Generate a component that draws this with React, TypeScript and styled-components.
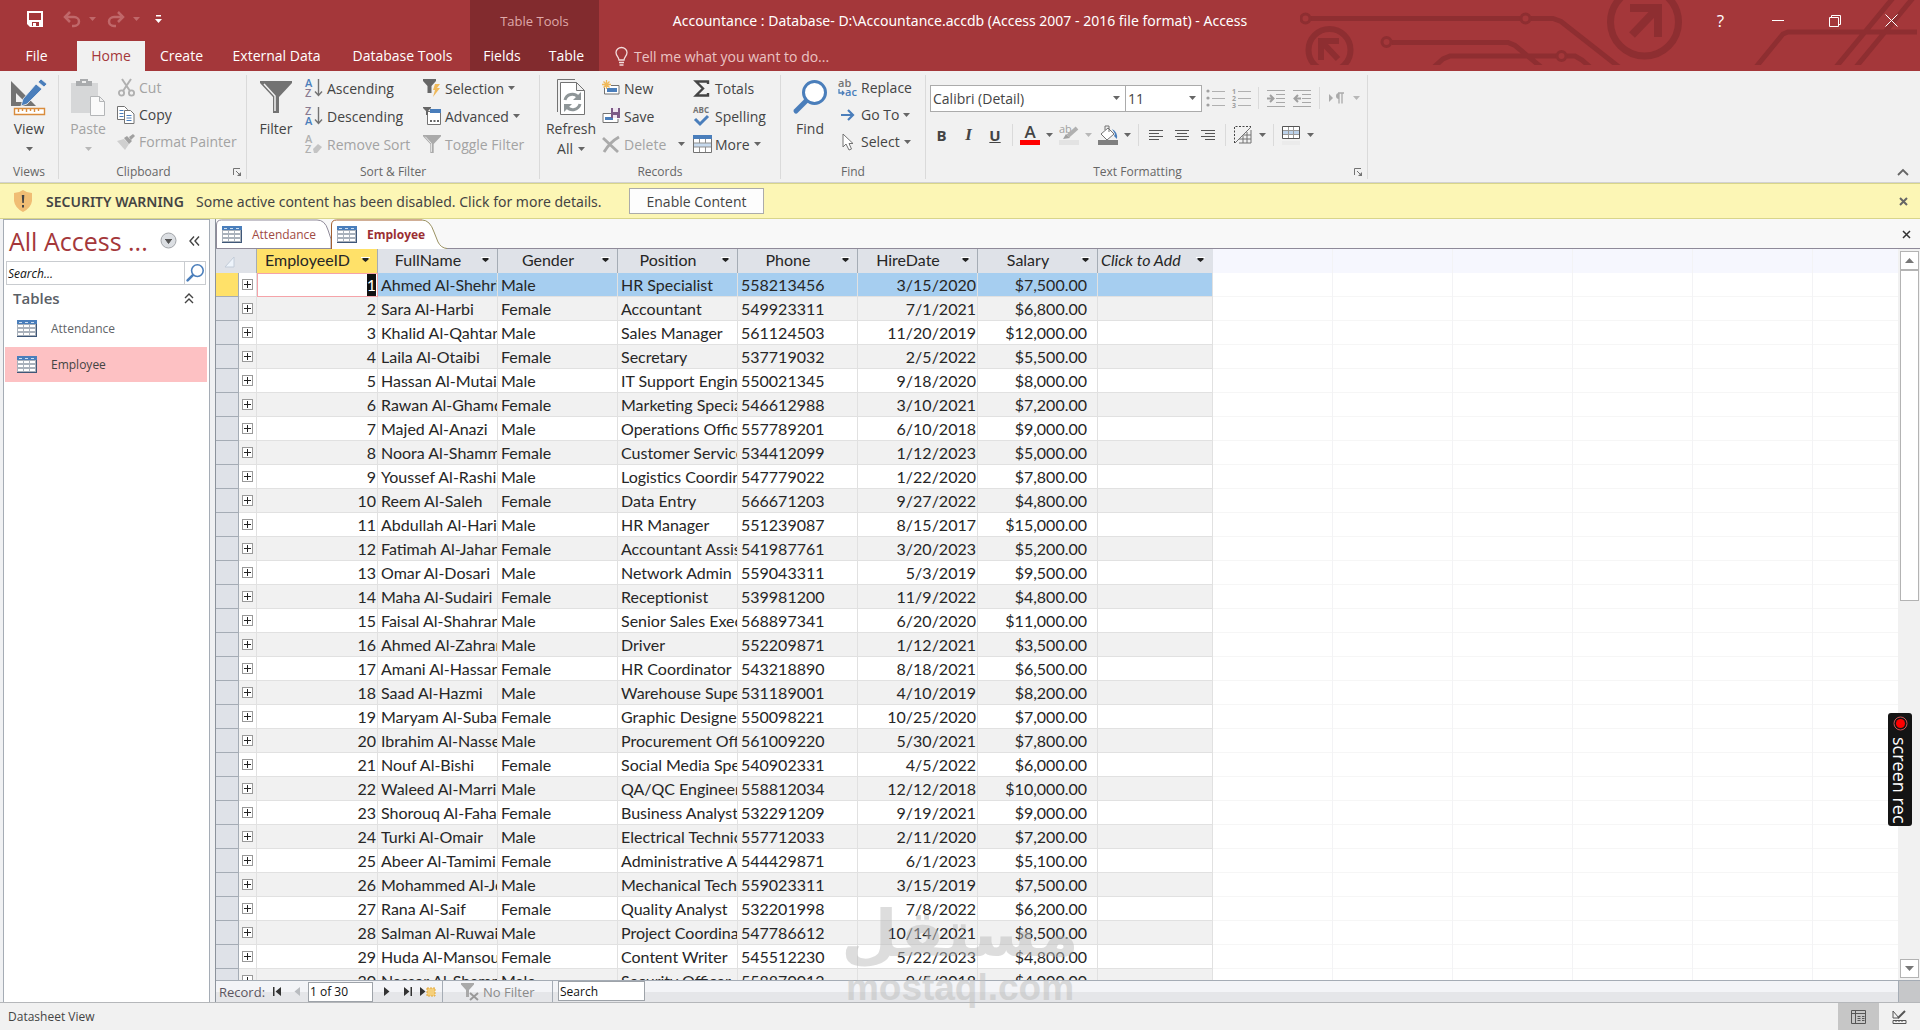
import React from 'react';
import styled, { createGlobalStyle, css } from 'styled-components';

const ui = `"Open Sans", "Noto Sans", sans-serif`;
const wideUi = `"Noto Sans", "Open Sans", sans-serif`;
const red = '#a4373a';
const darkRed = '#822b2e';
const line = '#a5acb5';

const Global = createGlobalStyle`
  * { box-sizing: border-box; }
  body { margin: 0; background: #f1f1f1; font-family: ${ui}; font-size: 14px; color: #444; overflow: hidden; }
  button, input, select { font: inherit; color: inherit; margin: 0; }
  button { padding: 0; border: 0; background: none; cursor: default; white-space: nowrap; }
  svg { display: block; flex: none; overflow: visible; }
`;

/* ---------- Frame ---------- */

const Window = styled.div`
  height: 100vh;
  display: flex;
  flex-direction: column;
  position: relative;
`;

const TopBand = styled.header`
  background: ${red};
  position: relative;
  color: #fff;
`;

const Circuit = styled.svg`
  position: absolute;
  top: 0;
  right: 0;
  overflow: hidden;
`;

const TitleRow = styled.div`
  display: grid;
  grid-template-columns: 1fr auto 1fr;
  height: 41px;
  align-items: center;
  position: relative;
`;

const TitleLeft = styled.div`
  display: flex;
  align-items: center;
  height: 41px;
`;

const QuickAccess = styled.div`
  display: flex;
  align-items: center;
  width: 470px;
  padding-left: 26px;
  padding-bottom: 3px;
`;

const QuickButton = styled.button<{ $w: number }>`
  width: ${(p) => p.$w}px;
  height: 24px;
  display: flex;
  align-items: center;
`;

const ContextTitle = styled.div`
  width: 129px;
  height: 41px;
  line-height: 43px;
  text-align: center;
  background: ${darkRed};
  color: #dfa9a9;
  font-size: 13px;
`;

const Title = styled.h1`
  margin: 0;
  font-family: ${wideUi};
  font-size: 14px;
  font-weight: 400;
  line-height: 20px;
`;

const WindowButtons = styled.div`
  display: flex;
  justify-content: flex-end;
`;

const WindowButton = styled.button`
  width: 57px;
  height: 38px;
  display: flex;
  align-items: center;
  justify-content: center;
  font-size: 17px;
`;

const Tabs = styled.nav`
  display: flex;
  height: 30px;
  position: relative;
`;

const Tab = styled.button<{ $w: number; $active?: boolean; $dark?: boolean; $file?: boolean }>`
  width: ${(p) => p.$w}px;
  height: 30px;
  line-height: 30px;
  padding-right: ${(p) => (p.$file ? 4 : 0)}px;
  text-align: center;
  background: ${(p) => (p.$active ? '#f1f1f1' : p.$dark ? darkRed : 'transparent')};
  color: ${(p) => (p.$active ? red : '#fff')};
`;

const TellMe = styled.button`
  display: flex;
  align-items: center;
  gap: 6px;
  padding-left: 16px;
  color: #eac4c4;
`;

/* ---------- Ribbon ---------- */

const Ribbon = styled.section`
  display: flex;
  height: 112px;
  padding: 4px 0 3px;
  background: #f1f1f1;
  border-bottom: 1px solid #d2d2d2;
`;

const Group = styled.div<{ $w: number }>`
  width: ${(p) => p.$w}px;
  display: flex;
  flex-direction: column;
  border-right: 1px solid #dadada;
`;

const GroupBody = styled.div<{ $column?: boolean }>`
  flex: 1;
  display: flex;
  flex-direction: ${(p) => (p.$column ? 'column' : 'row')};
  padding-left: 4px;
`;

const GroupFooter = styled.div`
  display: flex;
  align-items: center;
  height: 14px;
  line-height: 14px;
  font-size: 12px;
  color: #666;
`;

const GroupName = styled.span`
  flex: 1;
  text-align: center;
`;

const Launcher = styled.button`
  width: 18px;
  height: 12px;
  display: flex;
  justify-content: center;
  align-items: center;
`;

const BigButton = styled.button<{ $w?: number }>`
  width: ${(p) => p.$w || 50}px;
  height: 88px;
  display: flex;
  flex-direction: column;
  align-items: center;
  line-height: 18px;
  &:disabled { color: #a3a3a3; }
`;

const BigIcon = styled.span`
  height: 44px;
  display: flex;
  align-items: center;
`;

const BigLine = styled.span`
  height: 20px;
  display: flex;
  align-items: center;
  gap: 5px;
`;

const Stack = styled.div<{ $w?: number; $row: number }>`
  ${(p) => p.$w && css`width: ${p.$w}px;`}
  display: grid;
  grid-auto-rows: ${(p) => p.$row}px;
  align-content: start;
`;

const SmallButton = styled.button`
  display: flex;
  align-items: center;
  gap: 4px;
  padding: 0 4px 2px;
  text-align: left;
  &:disabled { color: #a3a3a3; }
`;

const SmallIcon = styled.span`
  width: 18px;
  display: flex;
  justify-content: center;
`;

const SplitGap = styled.span`
  width: 4px;
`;

const ToolRow = styled.div<{ $second?: boolean }>`
  display: flex;
  align-items: center;
  height: 26px;
  margin-top: ${(p) => (p.$second ? 11 : 10)}px;
  ${(p) => p.$second && css`margin-left: -2px;`}
`;

const Combo = styled.label<{ $w: number }>`
  display: grid;
  grid-template-columns: 1fr 12px;
  align-items: center;
  width: ${(p) => p.$w}px;
  height: 27px;
  background: #fff;
  border: 1px solid #ababab;
  & + & { margin-left: -1px; }
`;

const ComboSelect = styled.select`
  appearance: none;
  border: 0;
  background: none;
  height: 24px;
  padding: 0 0 0 2px;
  outline: none;
`;

const ToolButton = styled.button<{ $w?: number }>`
  width: ${(p) => p.$w || 26}px;
  height: 26px;
  display: flex;
  align-items: center;
  justify-content: center;
`;

const Letter = styled.span<{ $kind: 'b' | 'i' | 'u' }>`
  font-size: 15px;
  line-height: 18px;
  font-weight: 700;
  ${(p) => p.$kind === 'i' && css`font-family: "Liberation Serif", serif; font-style: italic; font-size: 17px;`}
  ${(p) => p.$kind === 'u' && css`text-decoration: underline;`}
`;

const Divider = styled.span`
  width: 1px;
  height: 22px;
  margin: 0 4px;
  background: #dadada;
`;

const RibbonEnd = styled.div`
  flex: 1;
  display: flex;
  align-items: flex-end;
  justify-content: flex-end;
  padding: 0 11px 3px;
`;

/* ---------- Message bar ---------- */

const MessageBar = styled.section`
  display: flex;
  align-items: center;
  height: 36px;
  padding: 0 12px 0 13px;
  background: #fcf6b5;
  border-top: 1px solid #d8d58b;
  border-bottom: 1px solid #d8d58b;
`;

const WarningTitle = styled.strong`
  margin-left: 13px;
  font-family: ${wideUi};
  font-weight: 600;
  width: 150px;
  white-space: nowrap;
`;

const WarningText = styled.span`
  width: 433px;
  font-family: ${wideUi};
  white-space: nowrap;
`;

const EnableButton = styled.button`
  width: 135px;
  height: 26px;
  background: #fdfdfd;
  border: 1px solid #ababab;
`;

const Spacer = styled.span`
  flex: 1;
`;

/* ---------- Navigation pane ---------- */

const Workspace = styled.div`
  flex: 1;
  min-height: 0;
  display: flex;
  background: #f0f1f3;
  border-bottom: 1px solid #b5b7ba;
`;

const Pane = styled.aside`
  width: 207px;
  margin: 0 5px 0 3px;
  background: #fff;
  border: 1px solid ${line};
  border-bottom: 0;
  padding-left: 1px;
`;

const PaneHead = styled.div`
  display: flex;
  align-items: center;
  height: 41px;
  padding: 0 10px 0 4px;
`;

const PaneTitle = styled.h2`
  margin: 0;
  flex: 1;
  font-size: 25px;
  line-height: 34px;
  font-weight: 400;
  color: ${red};
  white-space: nowrap;
`;

const PaneButton = styled.button`
  margin-left: 12px;
`;

const SearchBox = styled.div`
  display: flex;
  height: 24px;
  margin: 0 3px 0 1px;
  border: 1px solid #c9ccd0;
`;

const PaneSearch = styled.input`
  flex: 1;
  min-width: 0;
  border: 0;
  padding: 0 1px;
  font-size: 12px;
  font-style: italic;
  outline: none;
  &::placeholder { color: #111; opacity: 1; }
`;

const PaneSearchButton = styled.button`
  width: 21px;
  border-left: 1px solid #c9ccd0;
  display: flex;
  align-items: center;
  justify-content: center;
`;

const PaneGroup = styled.button`
  display: flex;
  align-items: center;
  justify-content: space-between;
  width: 100%;
  height: 26px;
  padding: 0 15px 0 8px;
  font-size: 15px;
  font-weight: 600;
  color: #5a6066;
`;

const PaneItem = styled.button<{ $active?: boolean }>`
  display: flex;
  align-items: center;
  gap: 14px;
  width: 202px;
  height: 35px;
  margin-bottom: 1px;
  padding-left: 12px;
  font-size: 12px;
  color: ${(p) => (p.$active ? '#444' : '#5f6469')};
  background: ${(p) => (p.$active ? '#fdc1c3' : 'transparent')};
`;

/* ---------- Document area ---------- */

const Doc = styled.main`
  flex: 1;
  min-width: 0;
  display: flex;
  flex-direction: column;
  border-left: 1px solid #8c939c;
  background: #f8f8f8;
`;

const DocTabs = styled.div`
  display: flex;
  height: 30px;
  padding-right: 9px;
  background: #f8f8f8;
  box-shadow: inset 0 -1px 0 #8f8a99;
`;

const DocTab = styled.button<{ $active?: boolean }>`
  position: relative;
  width: 115px;
  height: 30px;
  display: flex;
  align-items: center;
  gap: 10px;
  padding-left: 6px;
  font-size: 12px;
  font-weight: ${(p) => (p.$active ? 700 : 400)};
  color: ${(p) => (p.$active ? '#9b2f33' : '#a04a44')};
  & > * { position: relative; }
`;

const DocTabShape = styled.svg`
  && { position: absolute; left: 0; top: 0; }
`;

const Sheet = styled.div`
  flex: 1;
  min-height: 0;
  display: flex;
  overflow: hidden;
  background: #fff;
`;

const Table = styled.table`
  width: 997px;
  flex: none;
  align-self: flex-start;
  table-layout: fixed;
  border-collapse: separate;
  border-spacing: 0;
  font-family: Lato, "Open Sans", sans-serif;
  font-size: 16px;
  line-height: 22px;
  color: #262626;
`;

const Col = styled.col<{ $w: number }>`
  width: ${(p) => p.$w}px;
`;

const HeadCell = styled.th<{ $active?: boolean; $plain?: boolean; $add?: boolean }>`
  height: 24px;
  padding: 0 0 2px;
  font-weight: 400;
  font-style: ${(p) => (p.$add ? 'italic' : 'normal')};
  background: ${(p) => (p.$active ? '#ffe169' : '#dfe2e8')};
  border-right: 1px solid ${(p) => (p.$plain ? '#dfe2e8' : line)};
`;

const HeadInner = styled.span`
  display: flex;
  align-items: center;
  justify-content: space-between;
  padding: 0 7px 0 3px;
`;

const HeadLabel = styled.span`
  flex: 1;
  padding-right: 6px;
  text-align: center;
`;

const BodyRow = styled.tr<{ $current?: boolean }>`
  background: ${(p) => (p.$current ? '#a6cef0' : '#fff')};
  &:nth-child(even) { background: #f1f1f1; }
`;

const Cell = styled.td<{ $align?: 'right'; $padRight?: number }>`
  height: 24px;
  padding: 0 ${(p) => p.$padRight ?? 1}px 0 3px;
  border-right: 1px solid #e1e1e1;
  border-bottom: 1px solid #e1e1e1;
  text-align: ${(p) => p.$align || 'left'};
  white-space: nowrap;
  overflow: hidden;
`;

const RowSelector = styled.td<{ $current?: boolean }>`
  padding: 0;
  background: ${(p) => (p.$current ? '#ffe169' : '#dfe2e8')};
  border-right: 1px solid ${line};
  border-bottom: 1px solid ${line};
`;

const ExpandCell = styled.td<{ $current?: boolean }>`
  padding: 0 0 0 3px;
  border-right: 1px solid #e1e1e1;
  border-bottom: 1px solid #e1e1e1;
  ${(p) => p.$current && css`background: #fff;`}
`;

const ExpandButton = styled.button`
  display: block;
  width: 11px;
  height: 11px;
  border: 1px solid #9a9a9a;
  background: #fff;
`;

const ActiveCell = styled.td`
  height: 24px;
  padding: 0;
  background: #fff;
  outline: 1px solid #f5a3a9;
  outline-offset: -1px;
  text-align: right;
`;

const Selected = styled.span`
  display: inline-block;
  margin-right: 2px;
  background: #111;
  color: #fff;
`;

const Blank = styled.div`
  flex: 1;
  background:
    repeating-linear-gradient(to right, transparent 0 119px, #f3f3f5 119px 120px),
    linear-gradient(#f6f7fe 0 24px, transparent 24px),
    repeating-linear-gradient(to bottom, transparent 0 23px, #f6f6f6 23px 24px);
`;

const Scroll = styled.div`
  width: 22px;
  padding: 2px 1px 2px 2px;
  background: #f1f1f1;
  display: flex;
  flex-direction: column;
`;

const ScrollButton = styled.button`
  height: 19px;
  background: #fff;
  border: 1px solid #b3b3b3;
  display: flex;
  align-items: center;
  justify-content: center;
`;

const Track = styled.div`
  flex: 1;
`;

const Thumb = styled.div`
  height: 48%;
  background: #fff;
  border: 1px solid #b3b3b3;
`;

const RecordBar = styled.div`
  display: flex;
  height: 22px;
  border-top: 1px solid ${line};
  background: linear-gradient(#f3f4f7 0 11px, #e5e6e9 11px);
  font-size: 13px;
  color: #5c5560;
`;

const RecordNav = styled.div`
  display: flex;
  align-items: center;
  width: 227px;
  padding-left: 3px;
  border-right: 1px solid ${line};
`;

const RecordLabel = styled.label`
  width: 49px;
`;

const NavButton = styled.button<{ $w?: number }>`
  width: ${(p) => p.$w || 22}px;
  height: 20px;
  display: flex;
  align-items: center;
  justify-content: center;
`;

const RecordInput = styled.input<{ $w: number }>`
  width: ${(p) => p.$w}px;
  height: 20px;
  padding: 0 1px;
  border: 1px solid #9ea3a9;
  background: #fff;
  color: #111;
  font-size: 12px;
  &::placeholder { color: #111; opacity: 1; }
`;

const NoFilter = styled.button`
  display: flex;
  align-items: center;
  gap: 3px;
  width: 110px;
  padding-left: 18px;
  margin-right: 5px;
  border-right: 1px solid ${line};
  color: #8a8a8a;
`;

const Corner = styled.span`
  width: 22px;
  background: #c6c7c9;
  border-left: 1px solid ${line};
`;

/* ---------- Status bar ---------- */

const StatusBar = styled.footer`
  display: flex;
  align-items: center;
  height: 27px;
  padding-left: 8px;
  background: #f1f1f1;
  font-size: 12px;
`;

const ViewButton = styled.button<{ $active?: boolean }>`
  width: 41px;
  height: 27px;
  display: flex;
  align-items: center;
  justify-content: center;
  background: ${(p) => (p.$active ? '#c6c6c6' : 'transparent')};
`;

/* ---------- Overlays ---------- */

const Watermark = styled.div`
  position: absolute;
  left: 0;
  right: 0;
  bottom: 20px;
  display: flex;
  flex-direction: column;
  align-items: center;
  color: #bdbdbd;
  opacity: 0.5;
  font-weight: 700;
  pointer-events: none;
`;

const WatermarkArabic = styled.span`
  font-family: "DejaVu Sans", sans-serif;
  font-size: 65px;
  line-height: 64px;
`;

const WatermarkLatin = styled.span`
  font-family: "Liberation Sans", Arial, sans-serif;
  font-size: 37px;
  line-height: 44px;
`;

const Recorder = styled.button`
  position: absolute;
  right: 8px;
  bottom: 204px;
  width: 24px;
  height: 113px;
  padding-top: 3px;
  border-radius: 3px;
  background: #141414;
  color: #fff;
  display: flex;
  flex-direction: column;
  align-items: center;
  gap: 6px;
`;

const RecorderText = styled.span`
  writing-mode: vertical-rl;
  font-size: 18px;
  line-height: 20px;
`;

/* ---------- Icons ---------- */

const gray = '#737373';
const blue = '#4a7ebb';
const pale = '#b0b0b0';

const Caret = ({ c = '#666' }: { c?: string }) => (
  <svg width="7" height="4" viewBox="0 0 7 4"><path d="M0 0h7L3.500 4z" fill={c} /></svg>
);

const SaveIcon = () => (
  <svg width="18" height="18" viewBox="0 0 18 18">
    <path d="M1 1h16v16H4l-3-3z" fill="#fff" />
    <path d="M3 3h12v7H3zM6 12h7v4H6z" fill={red} />
    <path d="M7 13h3v4H7z" fill="#fff" />
  </svg>
);

const UndoIcon = ({ flip }: { flip?: boolean }) => (
  <svg width="19" height="18" viewBox="0 0 19 18">
    <g transform={flip ? 'translate(19 0) scale(-1 1)' : undefined} fill="none" stroke="#c0686a" strokeWidth="2.500">
      <path d="M2 7h9a5 4.500 0 0 1 0 9H9" />
      <path d="M7 2L2 7l5 5" />
    </g>
  </svg>
);

const CustomizeIcon = () => (
  <svg width="7" height="8" viewBox="0 0 7 8"><path d="M1 0h5v1.500H1zM0 4h7L3.500 8z" fill="#fff" /></svg>
);

const BulbIcon = () => (
  <svg width="13" height="19" viewBox="0 0 13 19" fill="none" stroke="#f3dcdc" strokeWidth="1.300">
    <path d="M4 13c0-3-3-4-3-7.500a5.500 5 0 0 1 11 0C12 9 9 10 9 13zM4 15.500h5M4.500 18h4" />
  </svg>
);

const CircuitArt = () => (
  <Circuit width="620" height="65" viewBox="1300 0 620 65" fill="none" stroke="#8e2e31" strokeWidth="5" aria-hidden="true">
    <path d="M1310 18.500H1520M1531 18.500h22l8 3L1619 67M1392 42.500h116l7 3L1541 67M1434 67l9-8 7-3H1556M1567 56h8l7 4 8 7" />
    <path d="M1756 67l27-33 5-2H1917M1836 67L1893-2M1856 67L1913-2" />
    <g strokeWidth="3">
      <circle cx="1305.500" cy="18.500" r="4.500" /><circle cx="1525.500" cy="18.500" r="4.500" />
      <circle cx="1386.500" cy="42" r="4.500" /><circle cx="1561.500" cy="56" r="4.500" />
    </g>
    <circle cx="1329.500" cy="50" r="21" strokeWidth="6" />
    <circle cx="1644.500" cy="22" r="34" strokeWidth="7" />
    <path d="M1321 60V41h18M1322 42l16 17" strokeWidth="6" />
    <path d="M1630 8h28v29M1656 10L1632 35" strokeWidth="8" />
  </Circuit>
);

const ViewIcon = () => (
  <svg width="38" height="38" viewBox="0 0 38 38">
    <path d="M1 3v25h25zM6 15l9 9H6z" fill={gray} fillRule="evenodd" />
    <path d="M31 1l6 5-3 3-6-5zM26 6l6 5-15 15-6 2 2-7z" fill={blue} stroke="#f1f1f1" strokeWidth="0.800" />
    <path d="M4.500 30.500h30v6h-30zM8.500 31v3M12.500 31v2M16.500 31v3M20.500 31v2M24.500 31v3M28.500 31v2" fill="#fff" stroke="#d98c3c" strokeWidth="1.400" />
  </svg>
);

const PasteIcon = () => (
  <svg width="36" height="38" viewBox="0 0 36 38">
    <path d="M1 5h27v30H1z" fill="#d6d7d8" />
    <path d="M6 3h4V1h8v2h4v5H6z" fill="#a9abad" /><path d="M12 3h4v2h-4z" fill="#eee" />
    <path d="M20.500 18.500h9l5 5v14h-14zM29.500 18.500v5h5" fill="#fafafa" stroke="#b4b6b8" />
  </svg>
);

const CutIcon = () => (
  <svg width="17" height="18" viewBox="0 0 17 18" fill="none" stroke={pale} strokeWidth="1.800">
    <path d="M4 0l8 12M13 0L5 12" strokeWidth="2" />
    <circle cx="3.500" cy="14" r="2.600" /><circle cx="13.500" cy="14" r="2.600" />
  </svg>
);

const CopyIcon = () => (
  <svg width="18" height="18" viewBox="0 0 18 18" fill="#fff" stroke={gray}>
    <path d="M.5.500h7l3 3v10H.5z" /><path d="M2.500 4.500h4M2.500 7.500h4M2.500 10.500h4" stroke={blue} />
    <path d="M7.500 4.500h6l3.500 3.500v9.500h-9.500z" /><path d="M9.500 9.500h5M9.500 12h5M9.500 14.500h5" stroke={blue} />
  </svg>
);

const BrushIcon = () => (
  <svg width="18" height="16" viewBox="0 0 18 16">
    <path d="M0 7l7-2 5 5-4 6z" fill="#cfcfcf" /><path d="M7 4l3-2 5 5-3 3zM12 3l4-3 2 2-4 4z" fill="#a0a0a0" />
  </svg>
);

const FunnelIcon = ({ w = 32, c = gray }: { w?: number; c?: string }) => (
  <svg width={w} height={w} viewBox="0 0 32 32">
    <path d="M0 0h32v2L19 16v16h-6V16L0 2z" fill={c} />
    <path d="M4 3l11 12v15" fill="none" stroke="#f3f3f3" strokeWidth="1.500" />
  </svg>
);

const SortText = styled.text`
  font-family: ${ui};
  font-size: 11px;
  font-weight: 600;
`;

const SortIcon = ({ a, b, ca, cb, off }: { a: string; b: string; ca: string; cb: string; off?: boolean }) => (
  <svg width="18" height="20" viewBox="0 0 18 20">
    <SortText x="0" y="9" fill={ca}>{a}</SortText>
    <SortText x="0" y="19" fill={cb}>{b}</SortText>
    {off
      ? <path d="M8 15l5-5 4 3-5 6H9z" fill="#c4c4c4" />
      : <path d="M13.500 1v16M10 13.500l3.500 4 3.500-4" fill="none" stroke={gray} strokeWidth="1.400" />}
  </svg>
);

const SelectionIcon = () => (
  <svg width="18" height="18" viewBox="0 0 18 18">
    <path d="M0 0h13v2L8.500 7v7h-4V7L0 2z" fill="#666" /><path d="M12 5h5l-3 4h3l-7 9 2-7h-2z" fill="#f0b95a" />
  </svg>
);

const AdvancedIcon = () => (
  <svg width="18" height="18" viewBox="0 0 18 18">
    <path d="M4.500 4.500h13v13h-13z" fill="#fff" stroke={gray} /><path d="M7 2h11v4H7z" fill={blue} />
    <path d="M0 0h8v1L5 4v4H3V4L0 1z" fill="#666" /><path d="M7 13h2v2H7zM10.500 13h2v2h-2zM14 13h2v2h-2z" fill="#666" />
  </svg>
);

const RefreshIcon = () => (
  <svg width="30" height="38" viewBox="0 0 30 38" fill="none">
    <path d="M1.500 34V1.500H19" stroke={gray} /><path d="M4.500 4.500h16l8 8v24h-24zM20.500 4.500v8h8" fill="#fff" stroke={gray} />
    <path d="M9 22a7.500 7.500 0 0 1 13-3M24 26a7.500 7.500 0 0 1-13 3" stroke="#8f9698" strokeWidth="3" />
    <path d="M25 14v8h-8zM8 34v-8h8z" fill="#8f9698" />
  </svg>
);

const NewIcon = () => (
  <svg width="18" height="16" viewBox="0 0 18 16">
    <path d="M2.500 7.500V14h14.500V5.500H9" fill="#fff" stroke={gray} /><path d="M5 8h10v4H5z" fill={blue} />
    <path d="M4.500 0v9M0 4.500h9M1.500 1.500l6 6M7.500 1.500l-6 6" stroke="#f0b95a" strokeWidth="1.300" />
  </svg>
);

const SaveRecordIcon = () => (
  <svg width="18" height="16" viewBox="0 0 18 16">
    <path d="M9 5.500H1v9h15V11" fill="#fff" stroke={gray} /><path d="M3 9h8v3H3z" fill={blue} />
    <path d="M9 0h9v10H9z" fill="#7c5a86" /><path d="M11 0h5v4h-5zM11 7h4v3h-4z" fill="#efe6f0" />
  </svg>
);

const DeleteIcon = () => (
  <svg width="18" height="17" viewBox="0 0 18 17"><path d="M1 2l15 14M17 1Q8 6 2 16" fill="none" stroke="#aaa" strokeWidth="2.800" /></svg>
);

const SigmaIcon = () => (
  <svg width="16" height="17" viewBox="0 0 16 17"><path d="M14 4V1.500H2L9 8.500 2 15.500h12V13" fill="none" stroke="#444" strokeWidth="2.400" /></svg>
);

const SpellIcon = () => (
  <svg width="18" height="20" viewBox="0 0 18 20">
    <text x="0" y="7" fontSize="8" fontWeight="700" fontFamily="Open Sans" fill={gray}>ABC</text>
    <path d="M2 13l5 5 8-8" fill="none" stroke={blue} strokeWidth="3" />
  </svg>
);

const MoreIcon = () => (
  <svg width="19" height="18" viewBox="0 0 19 18">
    <path d="M.5.500h18v17H.5z" fill="#fff" stroke={gray} /><path d="M0 0h19v4H0z" fill={blue} />
    <path d="M1 8h17v4H1z" fill="#c7daee" /><path d="M6.500 4v4M12.500 4v4M6.500 12v5M12.500 12v5M1 8h17M1 12h17" stroke="#8f8f8f" />
  </svg>
);

const MagnifierIcon = ({ size = 34, stroke = 3 }: { size?: number; stroke?: number }) => (
  <svg width={size} height={size} viewBox="0 0 34 34">
    <path d="M13 21L3 31" stroke={blue} strokeWidth={stroke + 2} strokeLinecap="round" />
    <circle cx="21.500" cy="12.500" r="11" fill="#fff" stroke={blue} strokeWidth={stroke} />
  </svg>
);

const ReplaceIcon = () => (
  <svg width="20" height="20" viewBox="0 0 20 20" fontFamily="Open Sans" fontSize="11" fontWeight="600">
    <text x="0" y="9" fill={gray}>ab</text><text x="7" y="18" fill={blue}>ac</text>
    <path d="M1 11v4h5M4 13l2 2-2 2" fill="none" stroke={blue} strokeWidth="1.300" />
  </svg>
);

const GoToIcon = () => (
  <svg width="14" height="12" viewBox="0 0 14 12"><path d="M0 6h12M7 1l5 5-5 5" fill="none" stroke={blue} strokeWidth="2.200" /></svg>
);

const PointerIcon = () => (
  <svg width="12" height="18" viewBox="0 0 12 18"><path d="M1 1v13l3-3 3 6 2.500-1L7 10.500h4z" fill="#fff" stroke={gray} /></svg>
);

const LauncherIcon = () => (
  <svg width="8" height="8" viewBox="0 0 8 8"><path d="M.5 7V.500H7M3 3l3 3" fill="none" stroke={gray} /><path d="M8 4v4H4z" fill={gray} /></svg>
);

const ListIcon = ({ numbered }: { numbered?: boolean }) => (
  <svg width="19" height="19" viewBox="0 0 19 19">
    {[2, 9, 16].map((y, i) => (
      <g key={y}>
        {numbered
          ? <text x="0" y={y + 3} fontSize="7" fontWeight="700" fontFamily="Open Sans" fill="#a0a0a0">{i + 1}</text>
          : <circle cx="2" cy={y} r="1.600" fill="#a0a0a0" />}
        <path d={`M6 ${y + 0.5}h13`} stroke="#b0b0b0" />
      </g>
    ))}
  </svg>
);

const IndentIcon = ({ out }: { out?: boolean }) => (
  <svg width="18" height="17" viewBox="0 0 18 17">
    <path d="M0 .500h18M9 4.500h9M9 8.500h9M9 12.500h9M0 16.500h18" stroke="#a8a8a8" />
    <path d={out ? 'M8 8.500H2M5 5L1.500 8.500 5 12' : 'M0 8.500h6M3 5l3.500 3.500L3 12'} fill="none" stroke="#a0a0a0" strokeWidth="2" />
  </svg>
);

const DirectionIcon = () => (
  <svg width="16" height="12" viewBox="0 0 16 12"><path d="M0 2l4 4-4 4z" fill="#aaa" /><path d="M10 1.500v10M13 1.500v10M15 1H9" stroke="#aaa" strokeWidth="1.300" /><path d="M10 1a3 3 0 0 0 0 6z" fill="#aaa" /></svg>
);

const FontColorIcon = () => (
  <svg width="20" height="20" viewBox="0 0 20 20">
    <text x="10" y="13" textAnchor="middle" fontSize="17" fontWeight="600" fontFamily="Open Sans" fill="#444">A</text>
    <path d="M0 15h20v5H0z" fill="#f00" />
  </svg>
);

const HighlightIcon = () => (
  <svg width="20" height="20" viewBox="0 0 20 20">
    <text x="0" y="8" fontSize="11" fontFamily="Open Sans" fill="#a0a0a0">ab</text>
    <path d="M18 3l-9 8" stroke="#b0b0b0" strokeWidth="4" /><path d="M4 14l3-5 4 4z" fill="#a0a0a0" />
    <path d="M0 15h20v5H0z" fill="#e3e3e3" />
  </svg>
);

const FillIcon = () => (
  <svg width="20" height="20" viewBox="0 0 20 20">
    <path d="M3 9l7-6 6 6-7 6z" fill="#fff" stroke={gray} /><path d="M7 5V1h4v6" fill="none" stroke={gray} />
    <path d="M14 4q6 3 5 10l-3-3 1-2z" fill={blue} /><path d="M0 15h20v5H0z" fill="#7f7f7f" />
  </svg>
);

const AlignIcon = ({ at }: { at: 0 | 1 | 2 }) => (
  <svg width="16" height="13" viewBox="0 0 16 13">
    {[14, 10, 14, 10].map((w, i) => {
      const x = 1 + ((14 - w) * at) / 2;
      return <path key={i} d={`M${x} ${i * 3 + 1.5}h${w}`} stroke="#555" strokeWidth="1" />;
    })}
  </svg>
);

const GridlinesIcon = () => (
  <svg width="18" height="18" viewBox="0 0 18 18" fill="none">
    <path d="M.500 17V.500H17" stroke="#444" strokeDasharray="2 1.500" /><path d="M1 17L17 1" stroke={gray} />
    <path d="M17 4v13H5M13 6v11M9 10v7M5 13h12M9 9h8" stroke={gray} />
  </svg>
);

const AltRowIcon = () => (
  <svg width="18" height="19" viewBox="0 0 18 19">
    <path d="M.5.500h17v12H.5z" fill="#fff" stroke="#555" /><path d="M1 4h16v4H1z" fill="#bcd2ea" />
    <path d="M6.500 1v11M11.500 1v11M1 4.500h16M1 8.500h16" stroke="#999" />
    <path d="M0 15h18v4H0z" fill="#ebebeb" />
  </svg>
);

const ChevronUp = () => (
  <svg width="12" height="8" viewBox="0 0 12 8"><path d="M1 7l5-5 5 5" fill="none" stroke="#666" strokeWidth="1.800" /></svg>
);

const CloseIcon = ({ c = '#666', w = 2 }: { c?: string; w?: number }) => (
  <svg width="9" height="9" viewBox="0 0 9 9"><path d="M1 1l7 7M8 1l-7 7" stroke={c} strokeWidth={w} /></svg>
);

const ShieldIcon = () => (
  <svg width="20" height="22" viewBox="0 0 20 22">
    <path d="M10 0q4 3 9 3v8q-1 7-9 11-8-4-9-11V3q5 0 9-3z" fill="#f0bd74" />
    <path d="M8.800 5h2.500l-.5 8h-1.500zM9 15h2v2.500H9z" fill="#444" />
  </svg>
);

const TableIcon = () => (
  <svg width="20" height="17" viewBox="0 0 20 17">
    <path d="M0 0h20v17H0z" fill="#a9b1bb" /><path d="M0 0h20v4H0z" fill={blue} />
    <path d="M1 5h5v2H1zM7 5h5v2H7zM13 5h5v2h-5zM1 9h5v2H1zM7 9h5v2H7zM13 9h5v2h-5zM1 13h5v2H1zM7 13h5v2H7zM13 13h5v2h-5z" fill="#fff" />
    <path d="M2 2.500h3M8 2.500h3M14 2.500h3" stroke="#cfe0f2" /><path d="M0 16.500h20M19.500 4v13" stroke="#3f5778" />
  </svg>
);

const HeadCaret = () => (
  <svg width="9" height="6" viewBox="0 0 9 6"><path d="M0 .500h9" stroke="#fff" /><path d="M1.500 1h6v1.500l-3 2.500-3-2.500z" fill="#222" /></svg>
);

const Tri = ({ dir, c = '#333' }: { dir: 'first' | 'prev' | 'next' | 'last'; c?: string }) => (
  <svg width="9" height="9" viewBox="0 0 9 9" fill={c}>
    {dir === 'first' && <path d="M0 0h1.500v9H0zM8 0v9L2.500 4.500z" />}
    {dir === 'prev' && <path d="M7 0v9L1.500 4.500z" />}
    {dir === 'next' && <path d="M2 0v9l5.500-4.500z" />}
    {dir === 'last' && <path d="M7.500 0H9v9H7.500zM1 0v9l5.500-4.500z" />}
  </svg>
);

/* ---------- Data ---------- */

type Employee = [string, 'Male' | 'Female', string, string, string, string];

const employees: Employee[] = [
  ['Ahmed Al-Shehri', 'Male', 'HR Specialist', '558213456', '3/15/2020', '$7,500.00'],
  ['Sara Al-Harbi', 'Female', 'Accountant', '549923311', '7/1/2021', '$6,800.00'],
  ['Khalid Al-Qahtani', 'Male', 'Sales Manager', '561124503', '11/20/2019', '$12,000.00'],
  ['Laila Al-Otaibi', 'Female', 'Secretary', '537719032', '2/5/2022', '$5,500.00'],
  ['Hassan Al-Mutairi', 'Male', 'IT Support Engineer', '550021345', '9/18/2020', '$8,000.00'],
  ['Rawan Al-Ghamdi', 'Female', 'Marketing Specialist', '546612988', '3/10/2021', '$7,200.00'],
  ['Majed Al-Anazi', 'Male', 'Operations Officer', '557789201', '6/10/2018', '$9,000.00'],
  ['Noora Al-Shammari', 'Female', 'Customer Service', '534412099', '1/12/2023', '$5,000.00'],
  ['Youssef Al-Rashid', 'Male', 'Logistics Coordinator', '547779022', '1/22/2020', '$7,800.00'],
  ['Reem Al-Saleh', 'Female', 'Data Entry', '566671203', '9/27/2022', '$4,800.00'],
  ['Abdullah Al-Harithi', 'Male', 'HR Manager', '551239087', '8/15/2017', '$15,000.00'],
  ['Fatimah Al-Jahani', 'Female', 'Accountant Assistant', '541987761', '3/20/2023', '$5,200.00'],
  ['Omar Al-Dosari', 'Male', 'Network Admin', '559043311', '5/3/2019', '$9,500.00'],
  ['Maha Al-Sudairi', 'Female', 'Receptionist', '539981200', '11/9/2022', '$4,800.00'],
  ['Faisal Al-Shahrani', 'Male', 'Senior Sales Executive', '568897341', '6/20/2020', '$11,000.00'],
  ['Ahmed Al-Zahrani', 'Male', 'Driver', '552209871', '1/12/2021', '$3,500.00'],
  ['Amani Al-Hassan', 'Female', 'HR Coordinator', '543218890', '8/18/2021', '$6,500.00'],
  ['Saad Al-Hazmi', 'Male', 'Warehouse Supervisor', '531189001', '4/10/2019', '$8,200.00'],
  ['Maryam Al-Subaie', 'Female', 'Graphic Designer', '550098221', '10/25/2020', '$7,000.00'],
  ['Ibrahim Al-Nasser', 'Male', 'Procurement Officer', '561009220', '5/30/2021', '$7,800.00'],
  ['Nouf Al-Bishi', 'Female', 'Social Media Specialist', '540902331', '4/5/2022', '$6,000.00'],
  ['Waleed Al-Marri', 'Male', 'QA/QC Engineer', '558812034', '12/12/2018', '$10,000.00'],
  ['Shorouq Al-Fahad', 'Female', 'Business Analyst', '532291209', '9/19/2021', '$9,000.00'],
  ['Turki Al-Omair', 'Male', 'Electrical Technician', '557712033', '2/11/2020', '$7,200.00'],
  ['Abeer Al-Tamimi', 'Female', 'Administrative Assistant', '544429871', '6/1/2023', '$5,100.00'],
  ['Mohammed Al-Johani', 'Male', 'Mechanical Technician', '559023311', '3/15/2019', '$7,500.00'],
  ['Rana Al-Saif', 'Female', 'Quality Analyst', '532201998', '7/8/2022', '$6,200.00'],
  ['Salman Al-Ruwaili', 'Male', 'Project Coordinator', '547786612', '10/14/2021', '$8,500.00'],
  ['Huda Al-Mansour', 'Female', 'Content Writer', '545512230', '5/22/2023', '$4,800.00'],
  ['Nasser Al-Shammari', 'Male', 'Security Officer', '558870012', '9/5/2018', '$4,000.00'],
];

const fields = ['EmployeeID', 'FullName', 'Gender', 'Position', 'Phone', 'HireDate', 'Salary'];

/* ---------- Components ---------- */

type SmallProps = { icon: React.ReactNode; text: string; off?: boolean; caret?: boolean; split?: boolean };

const Small = ({ icon, text, off, caret, split }: SmallProps) => (
  <SmallButton disabled={off}>
    <SmallIcon>{icon}</SmallIcon>
    {text}
    {split && <SplitGap />}
    {caret && <Caret />}
  </SmallButton>
);

const TitleBar = () => (
  <TopBand>
    <CircuitArt />
    <TitleRow>
      <TitleLeft>
        <QuickAccess>
          <QuickButton $w={37} aria-label="Save"><SaveIcon /></QuickButton>
          <QuickButton $w={26} aria-label="Undo"><UndoIcon /></QuickButton>
          <QuickButton $w={17} aria-label="Undo list"><Caret c="#c0686a" /></QuickButton>
          <QuickButton $w={27} aria-label="Redo"><UndoIcon flip /></QuickButton>
          <QuickButton $w={22} aria-label="Redo list"><Caret c="#c0686a" /></QuickButton>
          <QuickButton $w={12} aria-label="Customize"><CustomizeIcon /></QuickButton>
        </QuickAccess>
        <ContextTitle>Table Tools</ContextTitle>
      </TitleLeft>
      <Title>Accountance : Database- D:\Accountance.accdb (Access 2007 - 2016 file format) - Access</Title>
      <WindowButtons>
        <WindowButton>?</WindowButton>
        <WindowButton aria-label="Minimize"><svg width="12" height="1"><path d="M0 .500h12" stroke="#fff" /></svg></WindowButton>
        <WindowButton aria-label="Restore"><svg width="12" height="12" fill="none" stroke="#fff"><path d="M.500 2.500h9v9h-9zM2.500 2.500v-2h9v9h-2" /></svg></WindowButton>
        <WindowButton aria-label="Close"><svg width="13" height="13"><path d="M.500.500l12 12M12.500.500l-12 12" stroke="#fff" /></svg></WindowButton>
      </WindowButtons>
    </TitleRow>
    <Tabs>
      <Tab $w={77} $file>File</Tab>
      <Tab $w={68} $active>Home</Tab>
      <Tab $w={73}>Create</Tab>
      <Tab $w={117}>External Data</Tab>
      <Tab $w={135}>Database Tools</Tab>
      <Tab $w={64} $dark>Fields</Tab>
      <Tab $w={65} $dark>Table</Tab>
      <TellMe><BulbIcon />Tell me what you want to do...</TellMe>
    </Tabs>
  </TopBand>
);

const RibbonBar = () => (
  <Ribbon>
    <Group $w={59}>
      <GroupBody>
        <BigButton>
          <BigIcon><ViewIcon /></BigIcon>
          <BigLine>View</BigLine>
          <BigLine><Caret /></BigLine>
        </BigButton>
      </GroupBody>
      <GroupFooter><GroupName>Views</GroupName></GroupFooter>
    </Group>
    <Group $w={188}>
      <GroupBody>
        <BigButton disabled>
          <BigIcon><PasteIcon /></BigIcon>
          <BigLine>Paste</BigLine>
          <BigLine><Caret c="#b8b8b8" /></BigLine>
        </BigButton>
        <Stack $row={27}>
          <Small off icon={<CutIcon />} text="Cut" />
          <Small icon={<CopyIcon />} text="Copy" />
          <Small off icon={<BrushIcon />} text="Format Painter" />
        </Stack>
      </GroupBody>
      <GroupFooter><GroupName>Clipboard</GroupName><Launcher aria-label="Clipboard options"><LauncherIcon /></Launcher></GroupFooter>
    </Group>
    <Group $w={293}>
      <GroupBody>
        <BigButton>
          <BigIcon><FunnelIcon /></BigIcon>
          <BigLine>Filter</BigLine>
        </BigButton>
        <Stack $w={118} $row={28}>
          <Small icon={<SortIcon a="A" b="Z" ca={blue} cb="#8a7a90" />} text="Ascending" />
          <Small icon={<SortIcon a="Z" b="A" ca="#8a7a90" cb={blue} />} text="Descending" />
          <Small off icon={<SortIcon a="A" b="Z" ca={pale} cb={pale} off />} text="Remove Sort" />
        </Stack>
        <Stack $row={28}>
          <Small caret icon={<SelectionIcon />} text="Selection" />
          <Small caret icon={<AdvancedIcon />} text="Advanced" />
          <Small off icon={<FunnelIcon w={18} c="#aaa" />} text="Toggle Filter" />
        </Stack>
      </GroupBody>
      <GroupFooter><GroupName>Sort &amp; Filter</GroupName></GroupFooter>
    </Group>
    <Group $w={241}>
      <GroupBody>
        <BigButton $w={54}>
          <BigIcon><RefreshIcon /></BigIcon>
          <BigLine>Refresh</BigLine>
          <BigLine>All <Caret /></BigLine>
        </BigButton>
        <Stack $w={91} $row={28}>
          <Small icon={<NewIcon />} text="New" />
          <Small icon={<SaveRecordIcon />} text="Save" />
          <Small off split caret icon={<DeleteIcon />} text="Delete" />
        </Stack>
        <Stack $row={28}>
          <Small icon={<SigmaIcon />} text="Totals" />
          <Small icon={<SpellIcon />} text="Spelling" />
          <Small caret icon={<MoreIcon />} text="More" />
        </Stack>
      </GroupBody>
      <GroupFooter><GroupName>Records</GroupName></GroupFooter>
    </Group>
    <Group $w={145}>
      <GroupBody>
        <BigButton>
          <BigIcon><MagnifierIcon /></BigIcon>
          <BigLine>Find</BigLine>
        </BigButton>
        <Stack $row={27}>
          <Small icon={<ReplaceIcon />} text="Replace" />
          <Small caret icon={<GoToIcon />} text="Go To" />
          <Small caret icon={<PointerIcon />} text="Select" />
        </Stack>
      </GroupBody>
      <GroupFooter><GroupName>Find</GroupName></GroupFooter>
    </Group>
    <Group $w={442}>
      <GroupBody $column>
        <ToolRow>
          <Combo $w={196}>
            <ComboSelect aria-label="Font"><option>Calibri (Detail)</option></ComboSelect><Caret />
          </Combo>
          <Combo $w={77}>
            <ComboSelect aria-label="Font size"><option>11</option></ComboSelect><Caret />
          </Combo>
          <ToolButton aria-label="Bullets"><ListIcon /></ToolButton>
          <ToolButton aria-label="Numbering"><ListIcon numbered /></ToolButton>
          <Divider />
          <ToolButton aria-label="Increase indent"><IndentIcon /></ToolButton>
          <ToolButton aria-label="Decrease indent"><IndentIcon out /></ToolButton>
          <Divider />
          <ToolButton aria-label="Text direction"><DirectionIcon /></ToolButton>
          <ToolButton $w={13} aria-label="Direction list"><Caret c="#b8b8b8" /></ToolButton>
        </ToolRow>
        <ToolRow $second>
          <ToolButton $w={27}><Letter $kind="b">B</Letter></ToolButton>
          <ToolButton $w={27}><Letter $kind="i">I</Letter></ToolButton>
          <ToolButton $w={26}><Letter $kind="u">U</Letter></ToolButton>
          <Divider />
          <ToolButton aria-label="Font color"><FontColorIcon /></ToolButton>
          <ToolButton $w={13} aria-label="Font color list"><Caret /></ToolButton>
          <ToolButton aria-label="Highlight"><HighlightIcon /></ToolButton>
          <ToolButton $w={13} aria-label="Highlight list"><Caret c="#b8b8b8" /></ToolButton>
          <ToolButton aria-label="Background color"><FillIcon /></ToolButton>
          <ToolButton $w={13} aria-label="Background list"><Caret /></ToolButton>
          <Divider />
          <ToolButton aria-label="Align left"><AlignIcon at={0} /></ToolButton>
          <ToolButton aria-label="Center"><AlignIcon at={1} /></ToolButton>
          <ToolButton aria-label="Align right"><AlignIcon at={2} /></ToolButton>
          <Divider />
          <ToolButton aria-label="Gridlines"><GridlinesIcon /></ToolButton>
          <ToolButton $w={13} aria-label="Gridlines list"><Caret /></ToolButton>
          <Divider />
          <ToolButton aria-label="Alternate row color"><AltRowIcon /></ToolButton>
          <ToolButton $w={13} aria-label="Row color list"><Caret /></ToolButton>
        </ToolRow>
      </GroupBody>
      <GroupFooter><GroupName>Text Formatting</GroupName><Launcher aria-label="Formatting options"><LauncherIcon /></Launcher></GroupFooter>
    </Group>
    <RibbonEnd><button aria-label="Collapse ribbon"><ChevronUp /></button></RibbonEnd>
  </Ribbon>
);

const NavigationPane = () => (
  <Pane>
    <PaneHead>
      <PaneTitle>All Access ...</PaneTitle>
      <PaneButton aria-label="Pane menu">
        <svg width="17" height="17" viewBox="0 0 17 17"><circle cx="8.500" cy="8.500" r="7.500" fill="#dcdfe3" stroke="#a2a5a9" /><path d="M5 7.500h7M6 8h5l-2.500 3.500z" fill="#555" stroke="#555" /></svg>
      </PaneButton>
      <PaneButton aria-label="Collapse pane">
        <svg width="11" height="10" viewBox="0 0 11 10"><path d="M5 .500L1 5l4 4.500M10 .500L6 5l4 4.500" fill="none" stroke="#444" strokeWidth="1.400" /></svg>
      </PaneButton>
    </PaneHead>
    <SearchBox>
      <PaneSearch aria-label="Search objects" placeholder="Search..." />
      <PaneSearchButton aria-label="Search"><MagnifierIcon size={18} /></PaneSearchButton>
    </SearchBox>
    <PaneGroup>
      Tables
      <svg width="10" height="11" viewBox="0 0 10 11"><path d="M1 5l4-4 4 4M1 10l4-4 4 4" fill="none" stroke="#444" strokeWidth="1.400" /></svg>
    </PaneGroup>
    <PaneItem><TableIcon />Attendance</PaneItem>
    <PaneItem $active><TableIcon />Employee</PaneItem>
  </Pane>
);

const Datasheet = () => (
  <Table>
    <colgroup>
      <Col $w={23} /><Col $w={18} />
      {fields.map((f, i) => <Col key={f} $w={i === 0 ? 121 : 120} />)}
      <Col $w={115} />
    </colgroup>
    <thead>
      <tr>
        <HeadCell $plain aria-label="Select all">
          <svg width="20" height="22" viewBox="0 0 20 22"><path d="M18 8v10H9z" fill="#eef4fb" stroke="#c3ccd8" /></svg>
        </HeadCell>
        <HeadCell />
        {fields.map((f, i) => (
          <HeadCell key={f} $active={i === 0}>
            <HeadInner><HeadLabel>{f}</HeadLabel><HeadCaret /></HeadInner>
          </HeadCell>
        ))}
        <HeadCell $plain $add><HeadInner>Click to Add<HeadCaret /></HeadInner></HeadCell>
      </tr>
    </thead>
    <tbody>
      {employees.map(([name, gender, position, phone, hired, salary], i) => (
        <BodyRow key={name} $current={i === 0}>
          <RowSelector $current={i === 0} />
          <ExpandCell $current={i === 0}>
            <ExpandButton aria-label="Expand">
              <svg width="9" height="9"><path d="M1 4.500h7M4.500 1v7" stroke="#222" /></svg>
            </ExpandButton>
          </ExpandCell>
          {i === 0 ? <ActiveCell><Selected>1</Selected></ActiveCell> : <Cell $align="right">{i + 1}</Cell>}
          <Cell>{name}</Cell>
          <Cell>{gender}</Cell>
          <Cell>{position}</Cell>
          <Cell>{phone}</Cell>
          <Cell $align="right">{hired}</Cell>
          <Cell $align="right" $padRight={10}>{salary}</Cell>
          <Cell />
        </BodyRow>
      ))}
    </tbody>
  </Table>
);

const Document = () => (
  <Doc>
    <DocTabs>
      <DocTab>
        <DocTabShape width="116" height="30" viewBox="0 0 116 30">
          <path d="M.500 29.500V6q0-5 5-5H101q8 0 11 10l3 9v9.500z" fill="#fff" stroke="#8f8a99" />
        </DocTabShape>
        <TableIcon /><span>Attendance</span>
      </DocTab>
      <DocTab $active>
        <DocTabShape width="120" height="30" viewBox="0 0 120 30">
          <path d="M.500 30V6q0-5 5-5H91q8 0 12 12l4 10q3 6 9 6.500V30z" fill="#fff" />
          <path d="M.500 30V6q0-5 5-5H91" fill="none" stroke="#a4602f" />
          <path d="M91 1q8 0 12 12l4 10q3 6 9 6.500" fill="none" stroke="#9b9262" />
        </DocTabShape>
        <TableIcon /><span>Employee</span>
      </DocTab>
      <Spacer />
      <button aria-label="Close document"><CloseIcon c="#333" w={1.5} /></button>
    </DocTabs>
    <Sheet>
      <Datasheet />
      <Blank />
      <Scroll>
        <ScrollButton aria-label="Scroll up"><svg width="9" height="5"><path d="M0 5h9L4.500 0z" fill="#777" /></svg></ScrollButton>
        <Track><Thumb /></Track>
        <ScrollButton aria-label="Scroll down"><svg width="9" height="5"><path d="M0 0h9L4.500 5z" fill="#777" /></svg></ScrollButton>
      </Scroll>
    </Sheet>
    <RecordBar>
      <RecordNav>
        <RecordLabel htmlFor="record">Record:</RecordLabel>
        <NavButton $w={18} aria-label="First record"><Tri dir="first" /></NavButton>
        <NavButton aria-label="Previous record"><Tri dir="prev" c="#b9bcc0" /></NavButton>
        <RecordInput id="record" $w={65} defaultValue="1 of 30" />
        <NavButton $w={26} aria-label="Next record"><Tri dir="next" /></NavButton>
        <NavButton $w={16} aria-label="Last record"><Tri dir="last" /></NavButton>
        <NavButton $w={26} aria-label="New record">
          <svg width="16" height="10" viewBox="0 0 16 10"><path d="M0 0v9l5.500-4.500z" fill="#333" /><path d="M7 1h8v8H7z" fill="#f5cf7a" stroke="#e3a83c" strokeDasharray="2 1" /></svg>
        </NavButton>
      </RecordNav>
      <NoFilter>
        <svg width="19" height="18" viewBox="0 0 19 18"><path d="M0 0h13v1.500L8 7v7H5V7L0 1.500z" fill="#a9a9a9" /><path d="M9 10l8 7M17 10l-8 7" stroke="#999" strokeWidth="2" /></svg>
        No Filter
      </NoFilter>
      <RecordInput $w={87} aria-label="Search records" placeholder="Search" />
      <Spacer />
      <Corner />
    </RecordBar>
  </Doc>
);

export default function App() {
  return (
    <Window>
      <Global />
      <TitleBar />
      <RibbonBar />
      <MessageBar>
        <ShieldIcon />
        <WarningTitle>SECURITY WARNING</WarningTitle>
        <WarningText>Some active content has been disabled. Click for more details.</WarningText>
        <EnableButton>Enable Content</EnableButton>
        <Spacer />
        <button aria-label="Close message"><CloseIcon /></button>
      </MessageBar>
      <Workspace>
        <NavigationPane />
        <Document />
      </Workspace>
      <StatusBar>
        Datasheet View
        <Spacer />
        <ViewButton $active aria-label="Datasheet View">
          <svg width="15" height="14" fill="none" stroke="#555"><path d="M.500.500h14v13H.500zM.500 3.500h14M4.500.500v13M6.500 6.500h3M11 6.500h2.500M6.500 8.500h3M11 8.500h2.500M6.500 10.500h3M11 10.500h2.500" /></svg>
        </ViewButton>
        <ViewButton aria-label="Design View">
          <svg width="15" height="14" fill="none" stroke="#555"><path d="M1 1v7h6zM1 10.500h13v3H1zM4 11v1M7 11v1M10 11v1" /><path d="M13 1L6 8" strokeWidth="2" /></svg>
        </ViewButton>
      </StatusBar>
      <Watermark>
        <WatermarkArabic lang="ar" dir="rtl">مستقل</WatermarkArabic>
        <WatermarkLatin>mostaql.com</WatermarkLatin>
      </Watermark>
      <Recorder>
        <svg width="15" height="15"><circle cx="7.500" cy="7.500" r="6.500" fill="none" stroke="#c55" /><circle cx="7.500" cy="7.500" r="4.500" fill="#f00" /></svg>
        <RecorderText>screen rec</RecorderText>
      </Recorder>
    </Window>
  );
}
